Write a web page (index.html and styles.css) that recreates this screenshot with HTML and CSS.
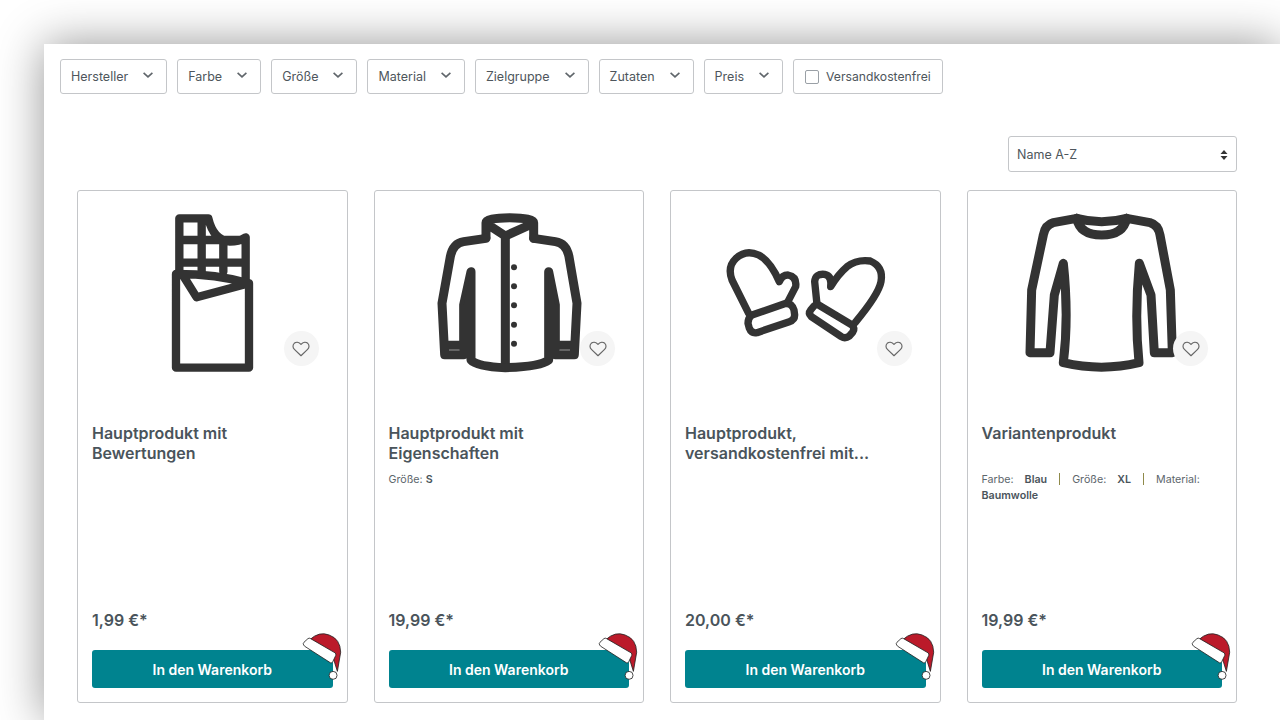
FILE: index.html
```html
<!DOCTYPE html>
<html lang="de">
<head>
<meta charset="utf-8">
<title>Produkte</title>
<link rel="stylesheet" href="styles.css">
</head>
<body>
<svg class="defs" width="0" height="0" aria-hidden="true">
  <defs>
    <symbol id="chev" viewBox="0 0 10 6"><path d="M.6.8 5 4.900 9.400.8" fill="none" stroke="#60666b" stroke-width="1.600"/></symbol>
    <symbol id="heart" viewBox="0 0 20 18"><path d="M10 16.600 2.600 9.400C.4 7.200.6 4.200 2.400 2.600 4.400.9 7.600 1 10 3.800 12.400 1 15.600.9 17.600 2.600c1.800 1.600 2 4.600-.2 6.800Z" fill="none" stroke="#666" stroke-width="1.300" stroke-linejoin="round"/></symbol>
    <symbol id="hat" viewBox="120 30 130 160">
      <path d="M150 62Q178 36 208 48 242 60 243 100L233 158 220 116Z" fill="#bb1a2a" stroke="#222" stroke-width="2.500" stroke-linejoin="round"/>
      <path d="M131 78Q128 74 132 70L144 59Q148 56 152 59L226 102Q230 105 228 110L219 129Q217 134 212 132L134 82Z" fill="#fff" stroke="#222" stroke-width="2.500" stroke-linejoin="round"/>
      <circle cx="220" cy="170" r="12" fill="#fff" stroke="#222" stroke-width="2.500"/>
    </symbol>
  </defs>
</svg>
<main class="panel">
  <div class="filters">
    <button class="filter">Hersteller<svg class="chev"><use href="#chev"/></svg></button>
    <button class="filter">Farbe<svg class="chev"><use href="#chev"/></svg></button>
    <button class="filter">Größe<svg class="chev"><use href="#chev"/></svg></button>
    <button class="filter">Material<svg class="chev"><use href="#chev"/></svg></button>
    <button class="filter">Zielgruppe<svg class="chev"><use href="#chev"/></svg></button>
    <button class="filter">Zutaten<svg class="chev"><use href="#chev"/></svg></button>
    <button class="filter">Preis<svg class="chev"><use href="#chev"/></svg></button>
    <label class="filter check"><span class="box"></span>Versandkostenfrei</label>
  </div>
  <div class="sort-row">
    <div class="sort">Name A-Z
      <svg class="updown" viewBox="0 0 8 10"><path d="M4 0 7.500 4H.5ZM4 10 .5 6h7Z" fill="#333"/></svg>
    </div>
  </div>
  <div class="grid">
    <article class="card">
      <div class="media">
        <svg class="art" viewBox="-69 15 510 510">
          <path d="M88 215V55H175Q190 120 240 125Q265 125 287 112V240M155 55V215M220 122V215M88 120H287M88 188H287"/>
          <path d="M78 222V503H297V250Q200 222 78 222ZM100 228 140 292 297 250"/>
        </svg>
        <button class="wish"><svg class="heart"><use href="#heart"/></svg></button>
      </div>
      <h2 class="title">Hauptprodukt mit Bewertungen</h2>
      <p class="meta"></p>
      <div class="price">1,99 €*</div>
      <div class="buy"><button class="cart">In den Warenkorb</button><svg class="hat"><use href="#hat"/></svg></div>
    </article>
    <article class="card">
      <div class="media">
        <svg class="art bold" viewBox="11 15 510 510">
          <path d="M197 112V68Q197 54 268 53 340 54 340 68V115M200 72 255 108 335 72M255 108V500"/>
          <path d="M197 115 130 125Q98 130 90 170L65 310 73 464H130L135 436H73M340 115 405 125Q438 130 446 170L470 310 462 464H405L400 436H462M130 445V315L152 215V480Q170 500 255 503 360 500 385 480V215L405 315V445"/>
          <path class="solid" d="M152 215 130 315H152ZM385 215 405 315H385Z"/>
          <g class="solid"><circle cx="281" cy="202" r="9"/><circle cx="281" cy="259" r="9"/><circle cx="281" cy="316" r="9"/><circle cx="281" cy="374" r="9"/><circle cx="281" cy="431" r="9"/></g>
        </svg>
        <button class="wish"><svg class="heart"><use href="#heart"/></svg></button>
      </div>
      <h2 class="title">Hauptprodukt mit Eigenschaften</h2>
      <p class="meta">Größe: <b>S</b></p>
      <div class="price">19,99 €*</div>
      <div class="buy"><button class="cart">In den Warenkorb</button><svg class="hat"><use href="#hat"/></svg></div>
    </article>
    <article class="card">
      <div class="media">
        <svg class="art thin" viewBox="14 -90 510 510">
          <path d="M100 235 50 135Q35 95 62 70 92 42 130 60 165 78 192 140 200 120 218 120 245 125 241 155L215 205"/>
          <path d="M110 240 212 205Q230 205 236 225L238 240Q238 255 222 260L125 293Q108 296 102 280L98 265Q98 248 110 240Z"/>
          <path d="M305 208 298 140Q300 115 328 118 350 122 346 155 368 118 395 95 425 72 465 78 505 95 497 140 490 178 420 262"/>
          <path d="M310 210 410 270Q420 280 412 292L402 303Q390 312 378 305L288 245Q278 235 286 225L296 213Q303 206 310 210Z"/>
        </svg>
        <button class="wish"><svg class="heart"><use href="#heart"/></svg></button>
      </div>
      <h2 class="title">Hauptprodukt, versandkostenfrei mit...</h2>
      <p class="meta"></p>
      <div class="price">20,00 €*</div>
      <div class="buy"><button class="cart">In den Warenkorb</button><svg class="hat"><use href="#hat"/></svg></div>
    </article>
    <article class="card">
      <div class="media">
        <svg class="art bold" viewBox="6 15 510 510">
          <path d="M185 55Q195 105 260 105 325 105 335 55M185 55Q260 75 335 55"/>
          <path d="M185 55 115 68Q90 75 85 105L50 270 45 458H105L118 285 145 190Q162 350 145 488 260 515 372 488 358 350 373 190L408 285 418 458H472L466 270 435 105Q430 75 405 68L335 55"/>
        </svg>
        <button class="wish"><svg class="heart"><use href="#heart"/></svg></button>
      </div>
      <h2 class="title">Variantenprodukt</h2>
      <p class="meta">Farbe: <b class="val">Blau</b><span class="sep"></span>Größe: <b class="val">XL</b><span class="sep"></span>Material: <b class="val wrap">Baumwolle</b></p>
      <div class="price">19,99 €*</div>
      <div class="buy"><button class="cart">In den Warenkorb</button><svg class="hat"><use href="#hat"/></svg></div>
    </article>
  </div>
</main>
</body>
</html>
```
FILE: styles.css
```css
* { box-sizing: border-box; }
html, body { margin: 0; height: 720px; overflow: hidden; background: #fff; }
body { font-family: Inter, "Liberation Sans", sans-serif; color: #4a545b; }
.defs { position: absolute; }
.panel {
  margin: 44px 0 0 44px;
  width: 1236px;
  height: 676px;
  padding: 15px 43px 0 16px;
  background: #fff;
  box-shadow: 0 0 44px rgba(0, 0, 0, .42);
}
.filters { display: flex; gap: 10px; }
.filter {
  display: flex;
  align-items: center;
  height: 35px;
  padding: 1px 13px 0 10px;
  border: 1px solid #c4c6c9;
  border-radius: 3px;
  background: #fff;
  font: 400 12.500px/1 Inter, "Liberation Sans", sans-serif;
  color: #4e565c;
}
.check { padding: 1px 11px 0; font-size: 12.200px; }
.chev { width: 10px; height: 6px; margin: -5px 0 0 15px; }
.box {
  width: 14px;
  height: 14px;
  margin-right: 7px;
  border: 1px solid #9aa0a6;
  border-radius: 2px;
}
.sort-row { display: flex; justify-content: flex-end; margin-top: 42px; }
.sort {
  position: relative;
  width: 229px;
  height: 36px;
  padding-left: 8px;
  border: 1px solid #c4c6c9;
  border-radius: 3px;
  font-size: 12.500px;
  line-height: 35px;
  color: #4e565c;
}
.updown { position: absolute; top: 13px; right: 8px; width: 8px; height: 10px; }
.grid {
  display: grid;
  grid-template-columns: repeat(4, 1fr);
  gap: 26px;
  margin: 18px 0 0 17px;
}
.card {
  display: flex;
  flex-direction: column;
  height: 513px;
  padding: 14px;
  border: 1px solid #c4c6c9;
  border-radius: 3px;
}
.media { position: relative; height: 218px; }
.art {
  display: block;
  width: 170px;
  height: 170px;
  margin: 0 auto;
  fill: none;
  stroke: #333;
  stroke-width: 25;
  stroke-linejoin: round;
  stroke-linecap: round;
}
.art.thin { stroke-width: 22; }
.art.bold { stroke-width: 27; }
.art .solid { fill: #333; stroke: none; }
.wish {
  position: absolute;
  top: 126px;
  right: 14px;
  display: flex;
  align-items: center;
  justify-content: center;
  width: 35px;
  height: 35px;
  padding: 0;
  border: 0;
  border-radius: 50%;
  background: #f5f5f5;
}
.heart { width: 18px; height: 16px; }
.title {
  height: 40px;
  margin: 0;
  font-size: 16px;
  font-weight: 600;
  line-height: 20px;
  color: #4a545b;
}
.meta {
  flex: 1;
  margin: 9px 0 0;
  font-size: 10.700px;
  line-height: 16px;
  color: #5d666c;
}
.meta b { font-weight: 600; color: #4a545b; }
.val { margin-left: 8px; }
.wrap { margin-left: 0; }
.sep {
  display: inline-block;
  width: 1px;
  height: 12px;
  margin: 0 12px;
  vertical-align: -2px;
  background: #8f8a4a;
}
.price { font-size: 16px; font-weight: 600; line-height: 24px; margin-bottom: 18px; color: #4a545b; }
.buy { position: relative; }
.cart {
  display: block;
  width: 100%;
  height: 38px;
  border: 0;
  border-radius: 3px;
  background: #00838f;
  font: 600 14px/38px Inter, "Liberation Sans", sans-serif;
  color: #fff;
}
.hat { position: absolute; top: -21px; right: -10px; width: 43px; height: 53px; }
```
